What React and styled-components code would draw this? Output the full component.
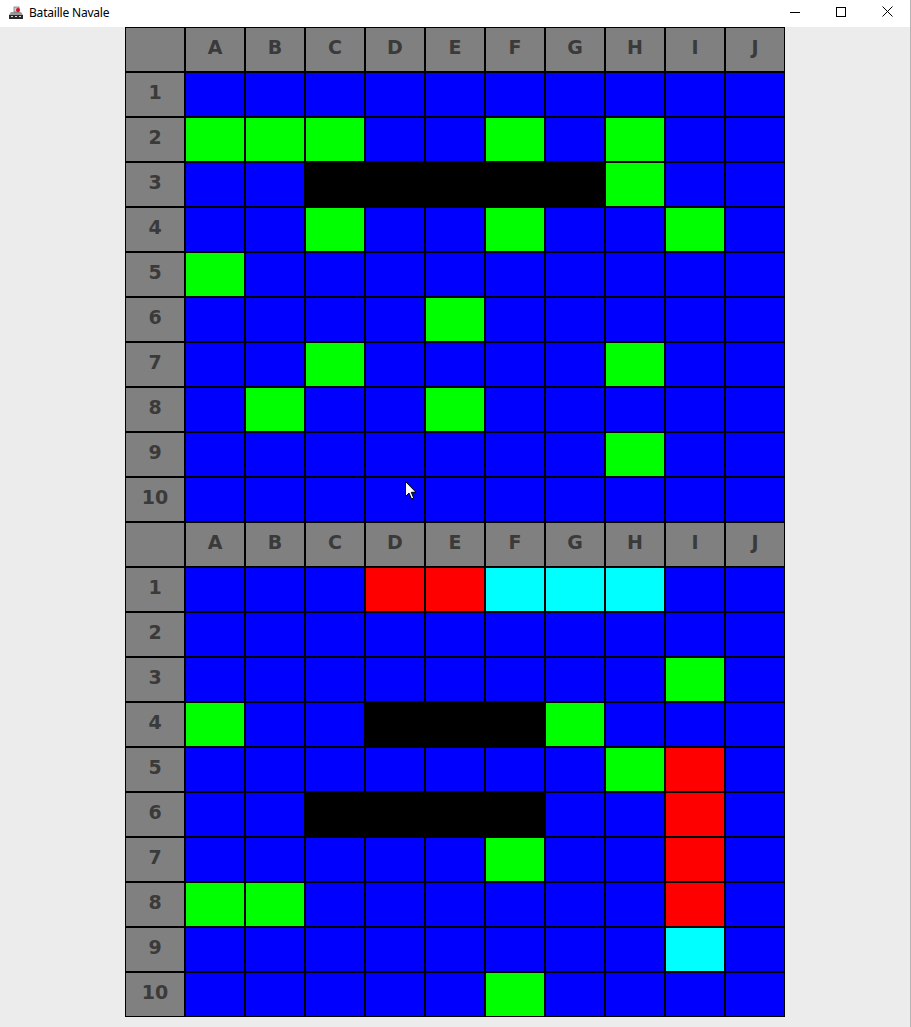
import React from 'react';
import styled, { createGlobalStyle } from 'styled-components';

const COLS = ['A', 'B', 'C', 'D', 'E', 'F', 'G', 'H', 'I', 'J'];

const COLORS = {
  w: '#0000ff',
  g: '#00ff00',
  k: '#000000',
  r: '#ff0000',
  c: '#00ffff',
};

// one string per row, one letter per column
const TOP_BOARD = [
  'wwwwwwwwww',
  'gggwwgwgww',
  'wwkkkkkgww',
  'wwgwwgwwgw',
  'gwwwwwwwww',
  'wwwwgwwwww',
  'wwgwwwwgww',
  'wgwwgwwwww',
  'wwwwwwwgww',
  'wwwwwwwwww',
];

const BOTTOM_BOARD = [
  'wwwrrcccww',
  'wwwwwwwwww',
  'wwwwwwwwgw',
  'gwwkkkgwww',
  'wwwwwwwgrw',
  'wwkkkkwwrw',
  'wwwwwgwwrw',
  'ggwwwwwwrw',
  'wwwwwwwwcw',
  'wwwwwgwwww',
];

const AppIcon = () => (
  <svg width="16" height="16" viewBox="0 0 16 16">
    <path d="M1 11 L3 8 L13 8 L15 11 Z" fill="#9a9a9a" />
    <rect x="6" y="3" width="5" height="5" fill="#d0d0d0" stroke="#555" strokeWidth="0.6" />
    <circle cx="10" cy="6" r="2" fill="#d8102a" />
    <rect x="1" y="11" width="14" height="4" fill="#2a2a2a" />
    <rect x="3" y="12" width="2" height="1" fill="#ddd" />
    <rect x="7" y="12" width="2" height="1" fill="#ddd" />
    <rect x="11" y="12" width="2" height="1" fill="#ddd" />
  </svg>
);

const Cursor = () => (
  <svg width="12" height="19" viewBox="0 0 12 19">
    <path d="M0.5 0.5 L0.5 15.5 L4 12 L6.5 18 L8.7 17 L6.3 11.3 L11 11.3 Z" fill="#fff" stroke="#000" strokeWidth="1" />
  </svg>
);

const Board = ({ rows }) => (
  <BoardGrid>
    <HeaderCell />
    {COLS.map((c) => (
      <HeaderCell key={c}>{c}</HeaderCell>
    ))}
    {rows.map((row, i) => (
      <React.Fragment key={i}>
        <HeaderCell>{i + 1}</HeaderCell>
        {row.split('').map((k, j) => (
          <Cell key={j} $color={COLORS[k]} />
        ))}
      </React.Fragment>
    ))}
  </BoardGrid>
);

const App = () => {
  return (
    <Window>
      <GlobalStyle />
      <TitleBar>
        <TitleLeft>
          <AppIcon />
          <Title>Bataille Navale</Title>
        </TitleLeft>
        <Controls>
          <ControlButton>
            <svg width="10" height="10" viewBox="0 0 10 10">
              <path d="M0 5.5 H10" stroke="#000" strokeWidth="1" />
            </svg>
          </ControlButton>
          <ControlButton>
            <svg width="10" height="10" viewBox="0 0 10 10">
              <rect x="0.5" y="0.5" width="9" height="9" fill="none" stroke="#000" strokeWidth="1" />
            </svg>
          </ControlButton>
          <ControlButton>
            <svg width="11" height="11" viewBox="0 0 11 11">
              <path d="M0.5 0.5 L10.5 10.5 M10.5 0.5 L0.5 10.5" stroke="#000" strokeWidth="1" />
            </svg>
          </ControlButton>
        </Controls>
      </TitleBar>
      <Content>
        <Boards>
          <Board rows={TOP_BOARD} />
          <Board rows={BOTTOM_BOARD} />
          <CursorSpot>
            <Cursor />
          </CursorSpot>
        </Boards>
      </Content>
    </Window>
  );
};

const GlobalStyle = createGlobalStyle`
body {
  margin: 0;
  background: #ececec;
  font-family: "DejaVu Sans", "Liberation Sans", sans-serif;
}
`

const Window = styled.div`
width: 911px;
height: 1027px;
display: flex;
flex-direction: column;
background: #ececec;
border-right: 1px solid #b4b4b4;
box-sizing: border-box;
overflow: hidden;
`

const TitleBar = styled.div`
height: 27px;
flex-shrink: 0;
background: #fff;
display: flex;
align-items: center;
justify-content: space-between;
`

const TitleLeft = styled.div`
display: flex;
align-items: center;
gap: 5px;
padding-left: 8px;
padding-bottom: 3px;
`

const Title = styled.span`
font-family: "Noto Sans", "Liberation Sans", sans-serif;
font-size: 12px;
letter-spacing: -0.2px;
color: #000;
`

const Controls = styled.div`
display: flex;
height: 100%;
`

const ControlButton = styled.div`
width: 46px;
height: 100%;
display: flex;
align-items: center;
justify-content: center;
padding-bottom: 4px;
box-sizing: border-box;
`

const Content = styled.div`
flex: 1;
display: flex;
justify-content: center;
`

const Boards = styled.div`
position: relative;
display: flex;
flex-direction: column;
`

const BoardGrid = styled.div`
display: grid;
grid-template-columns: repeat(11, 60px);
grid-auto-rows: 45px;
`

const HeaderCell = styled.div`
box-sizing: border-box;
border: 1px solid #000;
background: #808080;
color: #3a3a3a;
font-weight: bold;
font-size: 19px;
display: flex;
align-items: center;
justify-content: center;
padding-bottom: 6px;
`

const Cell = styled.div`
box-sizing: border-box;
border: 1px solid #000;
background: ${(p) => p.$color};
`

const CursorSpot = styled.div`
position: absolute;
left: 280px;
top: 454px;
line-height: 0;
`

export default App;
